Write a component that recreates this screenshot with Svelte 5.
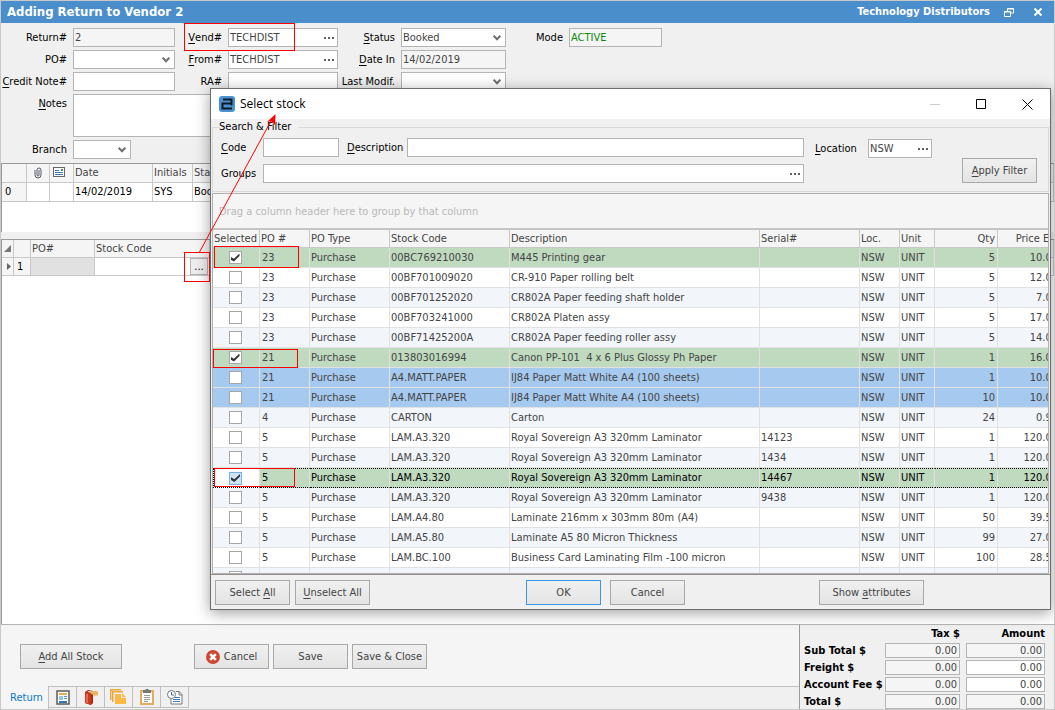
<script lang="ts">
  type StockRow = {
    po: string;
    code: string;
    desc: string;
    serial?: string;
    qty: number;
    price: string;
    selected?: boolean;
    tone?: 'green' | 'blue';
    focused?: boolean;
  };

  let rows: StockRow[] = $state([
    { po: '23', code: '00BC769210030', desc: 'M445 Printing gear', qty: 5, price: '10.00', selected: true, tone: 'green' },
    { po: '23', code: '00BF701009020', desc: 'CR-910 Paper rolling belt', qty: 5, price: '12.00' },
    { po: '23', code: '00BF701252020', desc: 'CR802A Paper feeding shaft holder', qty: 5, price: '7.00' },
    { po: '23', code: '00BF703241000', desc: 'CR802A Platen assy', qty: 5, price: '17.00' },
    { po: '23', code: '00BF71425200A', desc: 'CR802A Paper feeding roller assy', qty: 5, price: '14.00' },
    { po: '21', code: '013803016994', desc: 'Canon PP-101  4 x 6 Plus Glossy Ph Paper', qty: 1, price: '16.00', selected: true, tone: 'green' },
    { po: '21', code: 'A4.MATT.PAPER', desc: 'IJ84 Paper Matt White A4 (100 sheets)', qty: 1, price: '10.00', tone: 'blue' },
    { po: '21', code: 'A4.MATT.PAPER', desc: 'IJ84 Paper Matt White A4 (100 sheets)', qty: 10, price: '10.00', tone: 'blue' },
    { po: '4', code: 'CARTON', desc: 'Carton', qty: 24, price: '0.95' },
    { po: '5', code: 'LAM.A3.320', desc: 'Royal Sovereign A3 320mm Laminator', serial: '14123', qty: 1, price: '120.00' },
    { po: '5', code: 'LAM.A3.320', desc: 'Royal Sovereign A3 320mm Laminator', serial: '1434', qty: 1, price: '120.00' },
    { po: '5', code: 'LAM.A3.320', desc: 'Royal Sovereign A3 320mm Laminator', serial: '14467', qty: 1, price: '120.00', selected: true, tone: 'green', focused: true },
    { po: '5', code: 'LAM.A3.320', desc: 'Royal Sovereign A3 320mm Laminator', serial: '9438', qty: 1, price: '120.00' },
    { po: '5', code: 'LAM.A4.80', desc: 'Laminate 216mm x 303mm 80m (A4)', qty: 50, price: '39.50' },
    { po: '5', code: 'LAM.A5.80', desc: 'Laminate A5 80 Micron Thickness', qty: 99, price: '27.00' },
    { po: '5', code: 'LAM.BC.100', desc: 'Business Card Laminating Film -100 micron', qty: 100, price: '28.50' }
  ]);

  const totals = [
    { name: 'Sub Total $', editable: false },
    { name: 'Freight $', editable: true },
    { name: 'Account Fee $', editable: true },
    { name: 'Total $', editable: false }
  ];
</script>

{#snippet chevron()}
  <svg class="chevron" width="8" height="6" viewBox="0 0 8 6" aria-hidden="true">
    <path d="M.7.7l3.300 3.600L7.300.7" fill="none" stroke="#707070" stroke-width="2" />
  </svg>
{/snippet}

{#snippet dots()}
  <svg width="11" height="2" viewBox="0 0 11 2" aria-hidden="true">
    <path d="M0 1h2M4 1h2M8 1h2" stroke="#606060" stroke-width="2" />
  </svg>
{/snippet}

<div class="app">
  <header class="titlebar">
    <h1>Adding Return to Vendor 2</h1>
    <span class="company">Technology Distributors</span>
    <button type="button" aria-label="Restore">
      <svg width="10" height="9" viewBox="0 0 10 9">
        <path d="M3.500 3V.5h6V5H7M3 1h7M.5 3.500h6v5h-6zM0 4h7" fill="none" stroke="#fff" />
      </svg>
    </button>
    <button type="button" aria-label="Close">
      <svg width="8" height="8" viewBox="0 0 8 8">
        <path d="M.5.5l7 7M7.500.5l-7 7" stroke="#fff" stroke-width="2" />
      </svg>
    </button>
  </header>

  <form class="details">
    <label for="return-no">Return#</label>
    <div class="field locked"><input id="return-no" value="2" readonly /></div>
    <label for="vend"><u>V</u>end#</label>
    <div class="field">
      <input id="vend" value="TECHDIST" />
      <button type="button" class="more" aria-label="Find vendor">{@render dots()}</button>
    </div>
    <label for="status"><u>S</u>tatus</label>
    <div class="field">
      <select id="status"><option>Booked</option></select>
      {@render chevron()}
    </div>
    <label for="mode">Mode</label>
    <div class="field locked active"><input id="mode" value="ACTIVE" readonly /></div>

    <label class="first" for="po">PO#</label>
    <div class="field">
      <select id="po"><option></option></select>
      {@render chevron()}
    </div>
    <label for="from"><u>F</u>rom#</label>
    <div class="field">
      <input id="from" value="TECHDIST" />
      <button type="button" class="more" aria-label="Find sender">{@render dots()}</button>
    </div>
    <label for="date-in"><u>D</u>ate In</label>
    <div class="field locked"><input id="date-in" value="14/02/2019" readonly /></div>

    <label class="first" for="credit"><u>C</u>redit Note#</label>
    <div class="field"><input id="credit" /></div>
    <label for="ra">RA#</label>
    <div class="field"><input id="ra" /></div>
    <label for="modif">Last Modif.</label>
    <div class="field">
      <select id="modif"><option></option></select>
      {@render chevron()}
    </div>

    <label class="first" for="notes"><u>N</u>otes</label>
    <div class="field notes"><textarea id="notes"></textarea></div>

    <label class="first" for="branch">Branch</label>
    <div class="field branch">
      <select id="branch"><option></option></select>
      {@render chevron()}
    </div>
  </form>

  <section class="history">
    <table class="grid">
      <colgroup>
        <col class="w25" /><col class="w23" /><col class="w24" /><col class="w79" /><col class="w40" /><col />
      </colgroup>
      <thead>
        <tr>
          <th></th>
          <th class="icon-cell" aria-label="Attachment">
            <svg width="8" height="12" viewBox="0 0 8 12">
              <path d="M1 3v5a3 3 0 0 0 6 0V3a2 2 0 0 0-4 0v5a1 1 0 0 0 2 0V3" fill="none" stroke="#555b66" />
            </svg>
          </th>
          <th class="icon-cell mail" aria-label="Message">
            <svg width="12" height="10" viewBox="0 0 12 10">
              <rect x=".5" y=".5" width="11" height="9" fill="#fff" stroke="#666" />
              <path d="M8 2h2v2H8z" fill="#2f9e63" />
              <path d="M2 3.500h4M2 5.500h8M2 7.500h8" stroke="#3878b8" />
            </svg>
          </th>
          <th>Date</th>
          <th>Initials</th>
          <th>Status</th>
        </tr>
      </thead>
      <tbody>
        <tr>
          <td class="row-no">0</td>
          <td></td>
          <td></td>
          <td>14/02/2019</td>
          <td>SYS</td>
          <td>Booked</td>
        </tr>
      </tbody>
    </table>
  </section>

  <section class="lines">
    <table class="grid">
      <colgroup>
        <col class="w12" /><col class="w17" /><col class="w64" /><col class="w115" /><col />
      </colgroup>
      <thead>
        <tr>
          <th class="icon-cell" aria-label="Select all">
            <svg width="7" height="7" viewBox="0 0 7 7"><path d="M7 0v7H0z" fill="#777" /></svg>
          </th>
          <th></th>
          <th>PO#</th>
          <th>Stock Code</th>
          <th></th>
        </tr>
      </thead>
      <tbody>
        <tr>
          <td class="icon-cell row-no">
            <svg width="4" height="7" viewBox="0 0 4 7"><path d="M0 0l4 3.500L0 7z" fill="#666" /></svg>
          </td>
          <td class="row-no">1</td>
          <td class="grey"></td>
          <td class="lookup"><button type="button" aria-label="Find stock">...</button></td>
          <td></td>
        </tr>
      </tbody>
    </table>
  </section>

  <footer class="bottom">
    <div class="left">
      <div class="actions">
        <button type="button" class="btn add"><span><u>A</u>dd All Stock</span></button>
        <button type="button" class="btn">
          <svg width="14" height="14" viewBox="0 0 14 14" aria-hidden="true">
            <circle cx="7" cy="7" r="7" fill="#cf4630" />
            <path d="M4.200 4.200l5.600 5.600M9.800 4.200L4.200 9.800" stroke="#fff" stroke-width="2.600" />
          </svg>
          Cancel
        </button>
        <button type="button" class="btn">Save</button>
        <button type="button" class="btn">Save &amp; Close</button>
      </div>
      <nav class="tabs">
        <a href="#return">Return</a>
        <button type="button" aria-label="Details">
          <svg width="14" height="15" viewBox="0 0 14 15">
            <rect x="1" y="1" width="12" height="13" fill="#fff" stroke="#5a5a5a" stroke-width="1.500" />
            <path d="M3 3h8v2H3z" fill="#e8b04c" />
            <path d="M3 6h4v4H3z" fill="#8cc8f0" />
            <path d="M8 6.500h3M8 8.500h3" stroke="#5a8fc0" />
            <path d="M3 11h8v2H3z" fill="#2f78b8" />
          </svg>
        </button>
        <button type="button" aria-label="Stock book">
          <svg width="14" height="16" viewBox="0 0 14 16">
            <path d="M1 3l3-2 5 1v1l-4-1-2 1 6 1v10l-2 2-6-2z" fill="#a82810" />
            <path d="M1 3l6 2v11l-6-2z" fill="#d03a1c" />
            <path d="M3 5v9" stroke="#f0a090" />
            <path d="M6 3l2-1h5l1 1v4l-2-1-2 2v-2L7 5z" fill="#e8b468" />
          </svg>
        </button>
        <button type="button" aria-label="Documents">
          <svg width="17" height="16" viewBox="0 0 17 16">
            <path d="M.7 11V.7H11M2.700 13V2.700H13" fill="none" stroke="#e8a838" stroke-width="1.400" />
            <path d="M5 5h6v4h5v6H5z" fill="#fdb944" />
            <path d="M12 4l4 4h-4z" fill="#fdb944" />
          </svg>
        </button>
        <button type="button" aria-label="Clipboard">
          <svg width="14" height="16" viewBox="0 0 14 16">
            <rect x="1" y="2" width="12" height="13" fill="#fff" stroke="#e3ae5c" stroke-width="2" />
            <path d="M3 1h2l1-1h2l1 1h2v3H3z" fill="#777" />
            <path d="M4 6.500h6M4 8.500h6M4 10.500h6M4 12.500h4" stroke="#999" />
          </svg>
        </button>
        <button type="button" aria-label="Log">
          <svg width="16" height="15" viewBox="0 0 16 15">
            <path d="M9 1.500h3l3 3v9.500H4V8" fill="#fff" stroke="#777" />
            <path d="M12 1v4h3" fill="none" stroke="#777" />
            <path d="M8 7.500h5M6 9.500h7M6 11.500h7" stroke="#3878b8" />
            <circle cx="4.500" cy="4.500" r="4" fill="#fff" stroke="#777" />
            <path d="M4.500 2v3h2.500" fill="none" stroke="#3878b8" />
          </svg>
        </button>
        <span class="rest"></span>
      </nav>
    </div>
    <table class="totals">
      <thead>
        <tr><td></td><th>Tax $</th><th>Amount</th></tr>
      </thead>
      <tbody>
        {#each totals as t}
          <tr>
            <th>{t.name}</th>
            <td><input aria-label="{t.name} tax" value="0.00" readonly /></td>
            <td><input aria-label="{t.name} amount" class:editable={t.editable} value="0.00" readonly={!t.editable} /></td>
          </tr>
        {/each}
      </tbody>
    </table>
  </footer>

  <div class="dialog" role="dialog" aria-labelledby="dialog-title">
    <div class="caption">
      <svg width="16" height="16" viewBox="0 0 16 16" aria-hidden="true">
        <rect width="16" height="16" rx="3" fill="#4a90d2" />
        <path d="M4 3.500h8.500v6M12.500 7.500h-9v5h9.500" fill="none" stroke="#0c1c22" stroke-width="2" />
      </svg>
      <h2 id="dialog-title">Select stock</h2>
      <button type="button" aria-label="Minimise" disabled>
        <svg width="10" height="10" viewBox="0 0 10 10"><path d="M0 5.500h10" stroke="#ccc" /></svg>
      </button>
      <button type="button" aria-label="Maximise">
        <svg width="10" height="10" viewBox="0 0 10 10"><path d="M.5.5h9v9h-9z" fill="none" stroke="#000" /></svg>
      </button>
      <button type="button" aria-label="Close dialog">
        <svg width="11" height="11" viewBox="0 0 11 11"><path d="M.5.5l10 10M10.500.5l-10 10" stroke="#000" /></svg>
      </button>
    </div>

    <fieldset class="filter">
      <legend>Search &amp; Filter</legend>
      <div class="criteria">
        <div class="line">
          <label for="code"><u>C</u>ode</label>
          <div class="field code"><input id="code" /></div>
          <label class="desc-label" for="desc"><u>D</u>escription</label>
          <div class="field wide"><input id="desc" /></div>
        </div>
        <div class="line">
          <label for="groups">Groups</label>
          <div class="field wide">
            <input id="groups" />
            <button type="button" class="more" aria-label="Find groups">{@render dots()}</button>
          </div>
        </div>
      </div>
      <div class="location">
        <label for="location"><u>L</u>ocation</label>
        <div class="field">
          <input id="location" value="NSW" />
          <button type="button" class="more" aria-label="Find location">{@render dots()}</button>
        </div>
      </div>
      <button type="button" class="btn apply"><span><u>A</u>pply Filter</span></button>
    </fieldset>

    <div class="stock">
      <div class="group-hint">Drag a column header here to group by that column</div>
      <div class="scroll">
        <table class="grid">
          <colgroup>
            <col class="w47" /><col class="w50" /><col class="w80" /><col class="w120" /><col />
            <col class="w100" /><col class="w40" /><col class="w35" /><col class="w63" /><col class="w63" />
          </colgroup>
          <thead>
            <tr>
              <th>Selected</th>
              <th>PO #</th>
              <th>PO Type</th>
              <th>Stock Code</th>
              <th>Description</th>
              <th>Serial#</th>
              <th>Loc.</th>
              <th>Unit</th>
              <th class="num">Qty</th>
              <th class="num price">Price Ex</th>
            </tr>
          </thead>
          <tbody>
            {#each rows as row}
              <tr class={row.tone} class:focused={row.focused}>
                <td class="pick"><input type="checkbox" aria-label="Select {row.code}" bind:checked={row.selected} /></td>
                <td>{row.po}</td>
                <td>Purchase</td>
                <td>{row.code}</td>
                <td>{row.desc}</td>
                <td>{row.serial ?? ''}</td>
                <td>NSW</td>
                <td>UNIT</td>
                <td class="num">{row.qty}</td>
                <td class="num">{row.price}</td>
              </tr>
            {/each}
            <tr>
              <td class="pick"><input type="checkbox" aria-label="Select next row" /></td>
              <td></td><td></td><td></td><td></td><td></td><td></td><td></td><td></td><td></td>
            </tr>
          </tbody>
        </table>
      </div>
    </div>

    <div class="buttons">
      <button type="button" class="btn"><span>Select <u>A</u>ll</span></button>
      <button type="button" class="btn"><span><u>U</u>nselect All</span></button>
      <button type="button" class="btn ok">OK</button>
      <button type="button" class="btn">Cancel</button>
      <button type="button" class="btn attributes"><span>Show <u>a</u>ttributes</span></button>
    </div>
  </div>

  <svg class="markup" width="300" height="500" viewBox="0 0 300 500" aria-hidden="true">
    <g fill="none" stroke="#ff0000">
      <rect x="184.500" y="23.500" width="110" height="27" />
      <rect x="184.500" y="252.500" width="25" height="29" />
      <rect x="214.500" y="246.500" width="84" height="21" />
      <rect x="213.500" y="349.500" width="84" height="18" />
      <rect x="214.500" y="468.500" width="80" height="18" />
      <path d="M199.500 252L271 121" />
    </g>
    <path d="M275.500 114l-8.500 8 4-1 4 4z" fill="#ff0000" />
  </svg>
</div>

<style>
  :global(body) {
    margin: 0;
  }

  .app {
    position: relative;
    box-sizing: border-box;
    min-height: 100vh;
    display: flex;
    flex-direction: column;
    border: 1px solid #c9c9c9;
    background: #f0f0f0;
    color: #000;
    font: 11px/14px 'DejaVu Sans Condensed', 'DejaVu Sans', sans-serif;
    white-space: nowrap;
    overflow: hidden;
  }

  button,
  input,
  select,
  textarea {
    font: inherit;
    color: #444;
    margin: 0;
    padding: 0;
    border: 0;
    background: none;
    outline: 0;
    min-width: 0;
  }

  u {
    text-underline-offset: 2px;
  }

  .titlebar {
    display: flex;
    align-items: center;
    height: 22px;
    padding: 0 12px 0 6px;
    background: #4b8ecc;
    color: #fff;
    font-weight: bold;
  }
  .titlebar h1 {
    margin: 0 auto 0 0;
    font-size: 13px;
  }
  .titlebar button {
    display: flex;
    margin-left: 14px;
  }
  .titlebar button:last-child {
    margin-left: 20px;
  }

  .details {
    display: grid;
    grid-template-columns: 72px 102px 53px 110px 63px 105px 63px 93px;
    grid-template-rows: 19px 19px 19px 43px 19px;
    row-gap: 3px;
    padding: 5px 0 4px;
  }
  .details label {
    display: flex;
    justify-content: flex-end;
    padding: 3px 6px 0 0;
  }
  .first {
    grid-column: 1;
  }
  .notes {
    grid-column: 2 / 5;
  }

  .field {
    box-sizing: border-box;
    display: flex;
    align-items: center;
    height: 19px;
    border: 1px solid #b4b4b4;
    background: #fff;
  }
  .field.notes {
    height: 43px;
  }
  .field.branch {
    width: 58px;
  }
  .field input,
  .field select,
  .field textarea {
    flex: 1;
    width: 0;
    padding: 0 1px;
    appearance: none;
  }
  .field textarea {
    height: 100%;
    resize: none;
  }
  .locked {
    background: #f5f5f5;
  }
  .active input {
    color: #0a8a0a;
  }
  .more {
    display: flex;
    padding: 4px 2px 4px 4px;
  }
  .chevron {
    margin-right: 4px;
    pointer-events: none;
  }

  .grid {
    width: 100%;
    table-layout: fixed;
    border-collapse: separate;
    border-spacing: 0;
  }
  .grid th,
  .grid td {
    box-sizing: border-box;
    height: 19px;
    padding: 0 1px;
    border-right: 1px solid #c8c8c8;
    border-bottom: 1px solid #c8c8c8;
    text-align: left;
    overflow: hidden;
  }
  .grid th {
    font-weight: normal;
    color: #444;
    background: #f5f5f5;
  }
  .grid .icon-cell {
    padding: 0;
    text-align: center;
  }
  .icon-cell svg {
    vertical-align: middle;
  }
  .grid .mail {
    padding: 0 5px 2px 0;
  }
  .grid .row-no {
    padding-left: 3px;
    background: #f5f5f5;
  }
  .w12 { width: 12px; }
  .w17 { width: 17px; }
  .w23 { width: 23px; }
  .w24 { width: 24px; }
  .w25 { width: 25px; }
  .w35 { width: 35px; }
  .w40 { width: 40px; }
  .w47 { width: 47px; }
  .w50 { width: 50px; }
  .w63 { width: 63px; }
  .w64 { width: 64px; }
  .w79 { width: 79px; }
  .w80 { width: 80px; }
  .w100 { width: 100px; }
  .w115 { width: 115px; }
  .w120 { width: 120px; }

  .history {
    height: 68px;
    border-top: 1px solid #9a9a9a;
    border-left: 1px solid #9a9a9a;
    background: #fff;
  }

  .lines {
    flex: 1;
    margin-top: 7px;
    border-top: 1px solid #9a9a9a;
    border-left: 1px solid #9a9a9a;
    background: #fff;
  }
  .lines th,
  .lines td {
    height: 18px;
  }
  .lines .grey {
    background: #e1e1e1;
  }
  .lines .lookup {
    padding: 0 1px 0 0;
    text-align: right;
  }
  .lookup button {
    width: 18px;
    height: 17px;
    border: 1px solid #b4b4b4;
    background: #eee;
    color: #000;
  }

  .bottom {
    display: flex;
    height: 84px;
    border-top: 1px solid #b4b4b4;
  }
  .left {
    flex: 1;
    display: flex;
    flex-direction: column;
    background: #f5f5f5;
  }
  .actions {
    flex: 1;
    display: flex;
    gap: 4px;
    padding: 19px 0 0 19px;
  }
  .btn {
    box-sizing: border-box;
    display: flex;
    align-items: center;
    justify-content: center;
    gap: 4px;
    width: 75px;
    height: 25px;
    border: 1px solid #a8a8a8;
    background: linear-gradient(#f0f0f0, #e4e4e4);
  }
  .btn.add {
    width: 102px;
    margin-right: 68px;
  }

  .tabs {
    display: flex;
    height: 23px;
  }
  .tabs a {
    box-sizing: border-box;
    width: 48px;
    padding-left: 4px;
    border-right: 1px solid #c0c0c0;
    color: #0a78cc;
    text-align: center;
    line-height: 24px;
    text-decoration: none;
    background: #f5f5f5;
  }
  .tabs button {
    box-sizing: border-box;
    display: flex;
    align-items: center;
    justify-content: center;
    width: 28px;
    height: 22px;
    border: solid #c0c0c0;
    border-width: 1px 1px 1px 0;
    background: #f0f0f0;
  }
  .rest {
    flex: 1;
    border-top: 1px solid #c0c0c0;
    background: #f0f0f0;
  }

  .totals {
    width: 255px;
    height: 82px;
    padding: 0 9px 0 4px;
    border-left: 1px solid #9a9a9a;
    border-spacing: 0;
    box-sizing: border-box;
    table-layout: fixed;
  }
  .totals th,
  .totals td {
    padding: 0;
    height: 17px;
    text-align: left;
    font-weight: bold;
  }
  .totals thead th {
    height: 14px;
    text-align: right;
  }
  .totals th:nth-child(2) {
    width: 75px;
  }
  .totals th:nth-child(3) {
    width: 85px;
  }
  .totals input {
    box-sizing: border-box;
    display: block;
    width: 75px;
    height: 15px;
    margin-left: auto;
    border: 1px solid #b4b4b4;
    background: #f5f5f5;
    padding-right: 2px;
    text-align: right;
    font-weight: normal;
  }
  .totals td:last-child input {
    width: 79px;
  }
  .totals .editable {
    background: #fff;
  }

  .dialog {
    position: absolute;
    top: 87px;
    left: 209px;
    right: 3px;
    bottom: 99px;
    display: flex;
    flex-direction: column;
    box-sizing: border-box;
    border: 1px solid #6c6c6c;
    background: #f0f0f0;
    box-shadow: 0 3px 14px rgba(0, 0, 0, 0.38);
  }
  .caption {
    display: flex;
    align-items: center;
    height: 30px;
    padding-left: 8px;
    background: #fff;
  }
  .caption h2 {
    margin: 0 auto 0 5px;
    font: 12px/16px 'Open Sans', sans-serif;
  }
  .caption button {
    display: flex;
    justify-content: center;
    width: 46px;
  }

  .filter {
    display: flex;
    height: 72px;
    box-sizing: border-box;
    margin: 1px 1px 0;
    padding: 4px 11px 0 8px;
    border: 1px solid #d8d8d8;
    min-width: 0;
  }
  .filter legend {
    padding: 0 8px 0 0;
    margin-left: -2px;
  }
  .criteria {
    flex: 1;
    display: flex;
    flex-direction: column;
    gap: 7px;
  }
  .line,
  .location {
    display: flex;
    align-items: center;
  }
  .line label {
    width: 42px;
  }
  .line .desc-label {
    width: 60px;
    margin-left: 8px;
  }
  .code {
    width: 76px;
  }
  .wide {
    flex: 1;
  }
  .location {
    align-self: flex-start;
    margin: 1px 30px 0 11px;
  }
  .location label {
    width: 53px;
  }
  .location .field {
    width: 64px;
  }
  .apply {
    align-self: flex-start;
    margin-top: 20px;
  }

  .stock {
    flex: 1;
    min-height: 0;
    display: flex;
    flex-direction: column;
    margin: 1px 1px 0;
    border: 1px solid #b0b0b0;
    background: #fff;
  }
  .group-hint {
    height: 34px;
    border-bottom: 2px solid #c4c4c4;
    padding-left: 6px;
    line-height: 36px;
    color: #b8b8b8;
    background: #f5f5f5;
  }
  .scroll {
    flex: 1;
    min-height: 0;
    overflow: hidden;
  }
  .scroll .grid {
    width: calc(100% + 13px);
  }
  .scroll th {
    height: 18px;
  }
  .scroll td {
    height: 20px;
    border-color: #e1e1e1;
    color: #444;
    white-space: pre;
  }
  .scroll td:nth-child(2) {
    padding-left: 2px;
  }
  .scroll .num {
    padding-right: 2px;
    text-align: right;
  }
  .scroll .price {
    padding-right: 5px;
  }
  .scroll tbody tr:nth-child(odd) {
    background: #f2f5fa;
  }
  .scroll tbody tr.green {
    background: #bfdabf;
  }
  .scroll tbody tr.blue {
    background: #a6c9ef;
  }
  .scroll .focused td {
    color: #000;
    border-top: 1px dotted #000;
    border-bottom: 1px dotted #000;
  }
  .scroll .focused .pick {
    background: #fff;
    border-left: 1px dotted #000;
  }
  .scroll .pick {
    padding-right: 3px;
  }
  .pick input {
    display: grid;
    place-items: center;
    box-sizing: border-box;
    width: 13px;
    height: 13px;
    margin: 0 auto;
    appearance: none;
    border: 1px solid #a6a6a6;
    background: #fff;
  }
  .pick input:checked::after {
    content: '';
    width: 9px;
    height: 8px;
    background: #333;
    clip-path: polygon(0 40%, 38% 65%, 100% 0, 100% 32%, 38% 100%, 0 75%);
  }
  .focused .pick input {
    border-color: #7ab0e0;
    background: #cde4f8;
  }

  .buttons {
    display: flex;
    gap: 5px;
    padding: 5px 0 4px 4px;
    border-top: 1px solid #909090;
  }
  .buttons .ok {
    margin-left: 151px;
    border-color: #3a96e8;
  }
  .buttons .ok + .btn {
    margin-left: 4px;
  }
  .buttons .attributes {
    width: 105px;
    margin: 0 126px 0 auto;
  }

  .markup {
    position: absolute;
    top: -1px;
    left: -1px;
    pointer-events: none;
  }
</style>
